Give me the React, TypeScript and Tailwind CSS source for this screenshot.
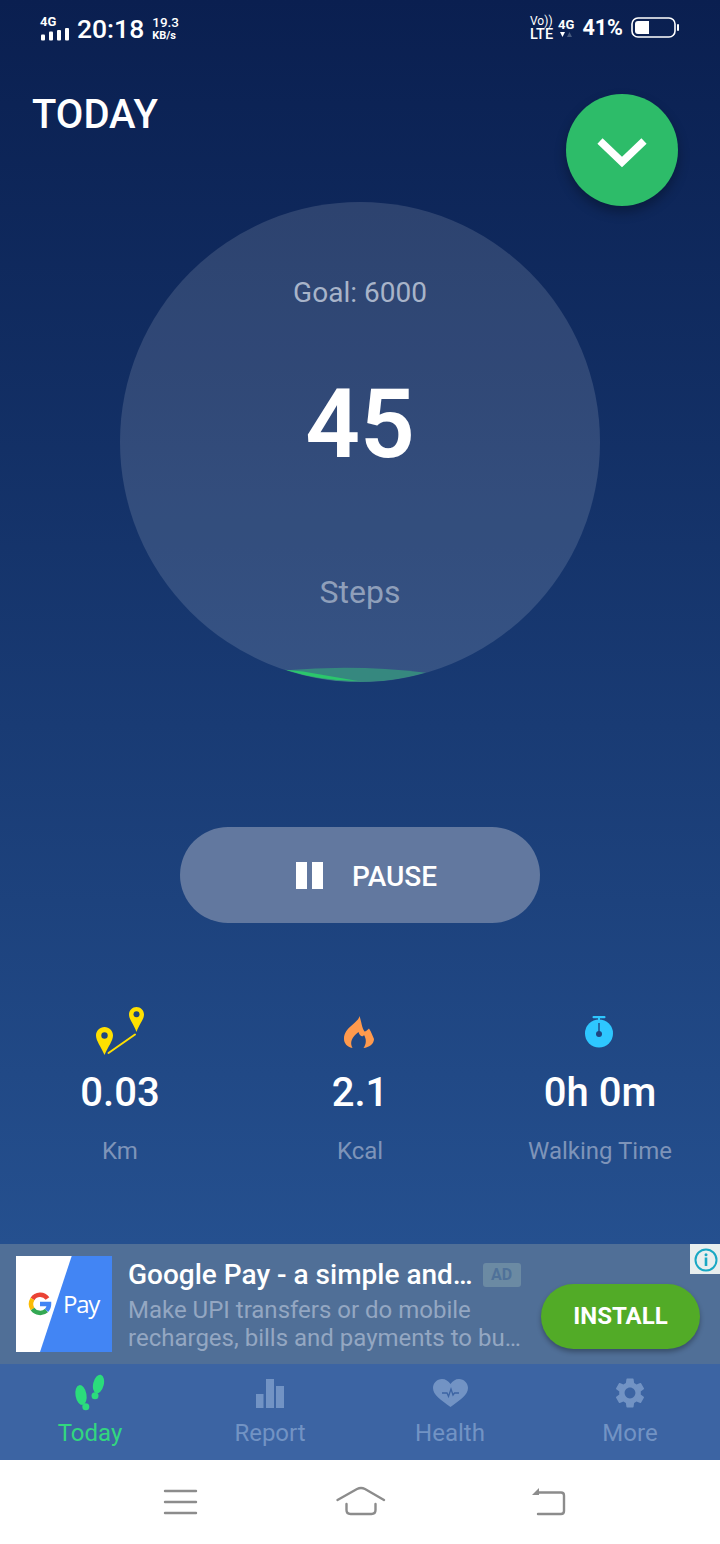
import { MdSettings } from "react-icons/md";

function Signal() {
  return (
    <div className="flex flex-col items-start">
      <span className="text-[13px] leading-[13px] font-bold text-white">4G</span>
      <svg width="30" height="14" viewBox="0 0 30 14" className="mt-[-1px]">
        <rect x="1" y="7.500" width="4" height="6" rx="1" fill="#fff" />
        <rect x="9" y="4.500" width="4" height="9" rx="1" fill="#fff" />
        <rect x="17" y="3" width="4" height="10.500" rx="1" fill="#fff" />
        <rect x="25" y="1" width="4" height="12.500" rx="1" fill="#fff" />
      </svg>
    </div>
  );
}

function Battery() {
  return (
    <svg width="49" height="22" viewBox="0 0 49 22">
      <rect x="1" y="1" width="43" height="19" rx="6" fill="none" stroke="#fff" strokeWidth="1.600" />
      <path d="M4 7a3 3 0 0 1 3-3h11v13H7a3 3 0 0 1-3-3z" fill="#fff" />
      <rect x="46" y="7" width="2" height="7" rx="1" fill="#fff" />
    </svg>
  );
}

function StatusBar() {
  return (
    <div className="flex h-[56px] items-center justify-between pl-[40px] pr-[40px] text-white">
      <div className="flex items-center">
        <Signal />
        <span className="mt-[1px] ml-[7px] text-[26.500px] leading-[32px] font-medium">20:18</span>
        <div className="ml-[8px] flex flex-col items-start font-medium">
          <span className="text-[13.500px] leading-[15px]">19.3</span>
          <span className="text-[11px] leading-[11px] font-bold">KB/s</span>
        </div>
      </div>
      <div className="flex items-center">
        <div className="flex flex-col items-start">
          <span className="text-[12px] leading-[13px]">Vo))</span>
          <span className="text-[14.500px] leading-[14px] font-medium">LTE</span>
        </div>
        <div className="ml-[5px] flex flex-col items-center">
          <span className="text-[13px] leading-[13px] font-bold">4G</span>
          <svg width="14" height="7" viewBox="0 0 14 7">
            <path d="M1 1h5L3.500 6z" fill="#fff" />
            <path d="M8 6h5L10.500 1z" fill="#475a7d" />
          </svg>
        </div>
        <span className="ml-[8px] text-[21.500px] leading-[24px] font-bold">41%</span>
        <div className="ml-[8px]">
          <Battery />
        </div>
      </div>
    </div>
  );
}

function Progress() {
  return (
    <svg width="480" height="480" viewBox="120 202 480 480" className="absolute inset-0">
      <path d="M286 670.300Q356 664 426 672.700A240 240 0 0 1 286 670.300z" fill="#36887f" />
      <path d="M285 669.800L303 671.600L358 681A240 240 0 0 1 285 669.800z" fill="#2bc76c" />
    </svg>
  );
}

function Pins() {
  return (
    <svg width="60" height="52" viewBox="90 1006 60 52">
      <path d="M104.500 1027c-4.700 0-8.500 3.800-8.500 8.500 0 5.500 5 11 8.500 19.500 3.500-8.500 8.500-14 8.500-19.500 0-4.700-3.800-8.500-8.500-8.500z" fill="#ffe000" />
      <circle cx="104.500" cy="1035.500" r="3.200" fill="#1f4580" />
      <path d="M136.500 1007c-4.100 0-7.500 3.300-7.500 7.500 0 5 4.500 9 7.500 17.500 3-8.500 7.500-12.500 7.500-17.500 0-4.200-3.400-7.500-7.500-7.500z" fill="#ffe000" />
      <circle cx="136.500" cy="1014.300" r="3" fill="#1f4580" />
      <path d="M108.500 1053L135 1034.500" stroke="#ffe000" strokeWidth="2" strokeLinecap="round" />
    </svg>
  );
}

function Flame() {
  return (
    <svg width="32" height="34" viewBox="344 1014 32 34">
      <path
        d="M359.500 1015C358.500 1022 344 1026 344 1038C344 1042 347 1046 352.500 1047C349.500 1042 351.500 1036 358.500 1031C360 1036 363 1036 364 1034C366.500 1038 366.500 1043 363.500 1047C369 1046.500 374 1043 374 1038C372.500 1035 371.500 1031 369 1027.500C367.500 1029 366 1030.500 364.500 1030.500C362 1027 361.500 1021 359.500 1015z"
        fill="#ff9a4d"
      />
    </svg>
  );
}

function Timer() {
  return (
    <svg width="30" height="34" viewBox="584 1014 30 34" className="ml-[-2px]">
      <rect x="592.500" y="1015" width="13" height="2.200" rx="1" fill="#2ec7ff" />
      <rect x="598" y="1016" width="2" height="3" fill="#2ec7ff" />
      <circle cx="599" cy="1032.500" r="14" fill="#2ec7ff" />
      <rect x="598.300" y="1022" width="1.400" height="9" fill="#1f4580" />
      <circle cx="599" cy="1033" r="3" fill="#1f4580" />
    </svg>
  );
}

function Stat({ icon, value, label }: { icon: React.ReactNode; value: string; label: string }) {
  return (
    <div className="flex w-[240px] flex-col items-center">
      <div className="flex h-[52px] items-center justify-center">{icon}</div>
      <div className="mt-[13px] text-[40px] leading-[44px] font-medium text-white">{value}</div>
      <div className="mt-[22px] text-[24px] leading-[28px] text-[#7e94b9]">{label}</div>
    </div>
  );
}

function GPay() {
  return (
    <div className="relative h-[96px] w-[96px] shrink-0 bg-white">
      <svg width="96" height="96" viewBox="0 0 96 96" className="absolute inset-0">
        <path d="M55.700 0H96V96H24z" fill="#4285f4" />
        <g fill="none" strokeWidth="4.500">
          <path d="M31.500 42.500A9 9 0 0 0 16.500 43" stroke="#ea4335" />
          <path d="M16.500 43A9.500 9.500 0 0 0 16.500 53" stroke="#fbbc04" />
          <path d="M16.500 53A9.500 9.500 0 0 0 30.500 54.500" stroke="#34a853" />
          <path d="M30.500 54.500A9.500 9.500 0 0 0 33 48H24" stroke="#4285f4" />
        </g>
      </svg>
      <span className="absolute left-[47px] top-[33px] text-[24px] leading-[30px] tracking-[-1.200px] text-white [font-family:'Open_Sans',Roboto,sans-serif]">
        Pay
      </span>
    </div>
  );
}

function Ad() {
  return (
    <div className="relative flex h-[120px] items-center bg-[#506f97] pl-[16px] pr-[20px]">
      <GPay />
      <div className="ml-[16px] mt-[4px] w-[413px] shrink-0">
        <div className="mt-[-2px] flex items-center">
          <span className="text-[28px] leading-[34px] font-medium text-white">Google Pay - a simple and…</span>
          <span className="ml-[10px] flex h-[24px] w-[38px] items-center justify-center rounded-[3px] bg-[#6b8aa3] text-[16px] font-bold text-[#4f7199]">
            AD
          </span>
        </div>
        <div className="mt-[4px] text-[24px] leading-[28px] text-[#94a7c2]">
          <div>Make UPI transfers or do mobile</div>
          <div>recharges, bills and payments to bu…</div>
        </div>
      </div>
      <button className="mt-[24px] flex h-[65px] w-[159px] shrink-0 items-center justify-center rounded-full bg-[#52ab27] text-[24px] font-bold text-white shadow-[0_3px_5px_rgba(0,0,0,0.3)]">
        INSTALL
      </button>
      <div className="absolute right-0 top-0 flex h-[30px] w-[30px] items-center justify-center bg-[#e8eeee]">
        <svg width="26" height="26" viewBox="0 0 26 26">
          <circle cx="14" cy="14" r="10.500" fill="none" stroke="#18a8c4" strokeWidth="2" />
          <circle cx="14" cy="8.800" r="1.500" fill="#18a8c4" />
          <rect x="12.700" y="11.500" width="2.600" height="8.500" fill="#18a8c4" />
        </svg>
      </div>
    </div>
  );
}

function NavItem({ icon, label, active }: { icon: React.ReactNode; label: string; active?: boolean }) {
  return (
    <div className="flex w-[180px] flex-col items-center">
      <div className="flex h-[44px] items-center justify-center">{icon}</div>
      <span className={"mt-[4px] text-[24px] leading-[28px] " + (active ? "text-[#32d77f]" : "text-[#7293c4]")}>{label}</span>
    </div>
  );
}

function Steps() {
  return (
    <svg width="40" height="38" viewBox="71 1375 40 38">
      <ellipse cx="82" cy="1396" rx="5.500" ry="10" transform="rotate(-10 82 1396)" fill="#2bdc7c" />
      <circle cx="86.800" cy="1407.800" r="3.500" fill="#2bdc7c" />
      <ellipse cx="99.500" cy="1385" rx="5.300" ry="9.500" transform="rotate(14 99.500 1385)" fill="#2bdc7c" />
      <circle cx="96" cy="1396.800" r="3.500" fill="#2bdc7c" />
    </svg>
  );
}

function Bars() {
  return (
    <svg width="30" height="30" viewBox="255 1378 30 30">
      <rect x="256" y="1394" width="7.500" height="14" fill="#7293c4" />
      <rect x="266" y="1379" width="8" height="29" fill="#7293c4" />
      <rect x="276" y="1386" width="8" height="22" fill="#7293c4" />
    </svg>
  );
}

function Heart() {
  return (
    <svg width="36" height="30" viewBox="432 1379 36 30">
      <path d="M450.500 1408C441 1401 433 1396 433 1389C433 1384 437 1380 442 1380C445.500 1380 448.500 1382 450.500 1385C452.500 1382 455.500 1380 459 1380C464 1380 468 1384 468 1389C468 1396 460 1401 450.500 1408z" fill="#7293c4" />
      <path d="M442 1394H447L448.500 1397.500L451 1390L453 1396L454.500 1394H459" fill="none" stroke="#3c64a3" strokeWidth="1.300" />
    </svg>
  );
}

function SystemNav() {
  return (
    <div className="flex h-[84px] items-start bg-white pl-[162px] pt-[26px]">
      <svg width="36" height="32" viewBox="0 0 36 32">
        <g stroke="#8c8c8c" strokeWidth="2.400" strokeLinecap="round">
          <path d="M3 5H34" />
          <path d="M3 16H34" />
          <path d="M3 27H34" />
        </g>
      </svg>
      <svg width="50" height="32" viewBox="0 0 50 32" className="ml-[138px]">
        <path d="M1.500 14L21 3Q25 1 29 3L48 14" fill="none" stroke="#8c8c8c" strokeWidth="2.400" strokeLinecap="round" />
        <path d="M10.500 18V24Q10.500 28 14.500 28H35.500Q39.500 28 39.500 24V18" fill="none" stroke="#8c8c8c" strokeWidth="2.400" strokeLinecap="round" />
      </svg>
      <svg width="36" height="32" viewBox="0 0 36 32" className="ml-[145px]">
        <path d="M8 6.500H30Q33 6.500 33 9.500V25Q33 28 30 28H7" fill="none" stroke="#8c8c8c" strokeWidth="2.400" strokeLinecap="round" />
        <path d="M8 2V9H1z" fill="#8c8c8c" />
      </svg>
    </div>
  );
}

export default function App() {
  return (
    <div className="flex h-[1544px] w-[720px] flex-col overflow-hidden [font-family:Roboto,sans-serif]">
      <div className="relative h-[1244px] bg-gradient-to-b from-[#0a1f50] to-[#25508f]">
        <StatusBar />
        <div className="h-[146px] pl-[32px] pt-[36px]">
          <h1 className="text-[40px] leading-[46px] font-medium text-white">TODAY</h1>
        </div>
        <div className="absolute left-[566px] top-[94px] flex h-[112px] w-[112px] items-center justify-center rounded-full bg-[#2dbc69] shadow-[0_6px_12px_rgba(0,0,0,0.3)]">
          <svg width="50" height="32" viewBox="0 0 50 32" className="mt-[3px]">
            <path d="M3 5L25 26L47 5" fill="none" stroke="#fff" strokeWidth="7.500" />
          </svg>
        </div>
        <div className="relative mx-auto flex h-[480px] w-[480px] flex-col items-center overflow-hidden rounded-full bg-white/[0.13]">
          <Progress />
          <div className="mt-[73px] text-[28px] leading-[36px] text-[#a8b4c9]">Goal: 6000</div>
          <div className="mt-[53px] text-[96px] leading-[120px] font-semibold text-white">45</div>
          <div className="mt-[89px] text-[32px] leading-[38px] text-[#8f9fba]">Steps</div>
        </div>
        <button className="mx-auto mt-[145px] flex h-[96px] w-[360px] items-center justify-center rounded-full bg-[#62789f] pl-[13px] text-white">
          <span className="flex items-center gap-[5px]">
            <span className="block h-[27px] w-[11px] bg-white" />
            <span className="block h-[27px] w-[11px] bg-white" />
          </span>
          <span className="mt-[3px] ml-[29px] text-[28px] font-medium">PAUSE</span>
        </button>
        <div className="mt-[83px] flex">
          <Stat icon={<Pins />} value="0.03" label="Km" />
          <Stat icon={<Flame />} value="2.1" label="Kcal" />
          <Stat icon={<Timer />} value="0h 0m" label="Walking Time" />
        </div>
      </div>
      <Ad />
      <div className="flex h-[96px] items-start bg-[#3c64a3] pt-[7px]">
        <NavItem icon={<Steps />} label="Today" active />
        <NavItem icon={<Bars />} label="Report" />
        <NavItem icon={<Heart />} label="Health" />
        <NavItem icon={<MdSettings size={36} color="#7293c4" />} label="More" />
      </div>
      <SystemNav />
    </div>
  );
}
